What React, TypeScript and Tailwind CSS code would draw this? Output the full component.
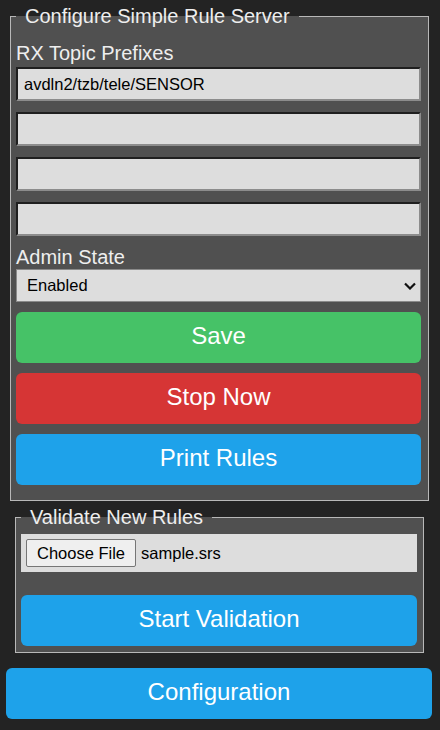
const topics = ['avdln2/tzb/tele/SENSOR', '', '', ''];

function TopicInput({ value, first }: { value: string; first: boolean }) {
  return (
    <div
      className={`${first ? 'mt-[4px]' : 'mt-[11px]'} h-[34px] bg-[#dddddd] border-2 border-t-[#1f1f1f] border-l-[#1f1f1f] border-b-[#8c8c8c] border-r-[#8c8c8c] px-[6px] flex items-center text-[16.5px] text-black`}
    >
      {value}
    </div>
  );
}

export default function App() {
  return (
    <div
      className="min-h-[730px] w-[440px] bg-[#232323] pt-[6px] overflow-hidden"
      style={{ fontFamily: '"Liberation Sans", Arial, sans-serif' }}
    >
      <fieldset className="ml-[10px] w-[419px] border border-[#b8b8b8] bg-[#505050] pl-[5px] pr-[7px] pb-[15px]">
        <legend className="px-[9px] text-[20px] leading-[20px] text-[#eeeeee]">
          Configure Simple Rule Server
        </legend>
        <div className="mt-[17px] text-[20px] leading-[20px] text-[#eeeeee]">RX Topic Prefixes</div>
        {topics.map((t, i) => (
          <TopicInput key={i} value={t} first={i === 0} />
        ))}
        <div className="mt-[11px] text-[20px] leading-[20px] text-[#eeeeee]">Admin State</div>
        <div className="mt-[2px] h-[33px] bg-[#dddddd] border border-[#8a8a8a] flex items-center justify-between pl-[10px] pr-[4px] text-[16.5px] text-black">
          <span>Enabled</span>
          <svg width="12" height="8" viewBox="0 0 12 8" fill="none" stroke="#111" strokeWidth="2.2">
            <polyline points="1,1.5 6,6.5 11,1.5" />
          </svg>
        </div>
        <div className="mt-[10px] flex flex-col gap-[10px]">
          <button className="h-[51px] pb-[3px] rounded-[6px] bg-[#46c267] text-white text-[24px]">Save</button>
          <button className="h-[51px] pb-[3px] rounded-[6px] bg-[#d63535] text-white text-[24px]">Stop Now</button>
          <button className="h-[51px] pb-[3px] rounded-[6px] bg-[#1ea2ea] text-white text-[24px]">Print Rules</button>
        </div>
      </fieldset>

      <fieldset className="mt-[6px] ml-[15px] w-[409px] border border-[#b8b8b8] bg-[#505050] pl-[5px] pr-[6px] pb-[6px]">
        <legend className="px-[9px] text-[20px] leading-[20px] text-[#eeeeee]">
          Validate New Rules
        </legend>
        <div className="mt-[7px] h-[38px] bg-[#dddddd] flex items-center pl-[5px] text-[16.5px] text-black">
          <span className="h-[28px] px-[10px] flex items-center bg-[#efefef] border border-[#767676] rounded-[2px]">
            Choose File
          </span>
          <span className="ml-[5px]">sample.srs</span>
        </div>
        <button className="mt-[23px] w-full h-[51px] pb-[3px] rounded-[6px] bg-[#1ea2ea] text-white text-[24px]">
          Start Validation
        </button>
      </fieldset>

      <button className="mt-[15px] ml-[6px] w-[426px] h-[51px] pb-[3px] rounded-[6px] bg-[#1ea2ea] text-white text-[24px]">
        Configuration
      </button>
    </div>
  );
}
